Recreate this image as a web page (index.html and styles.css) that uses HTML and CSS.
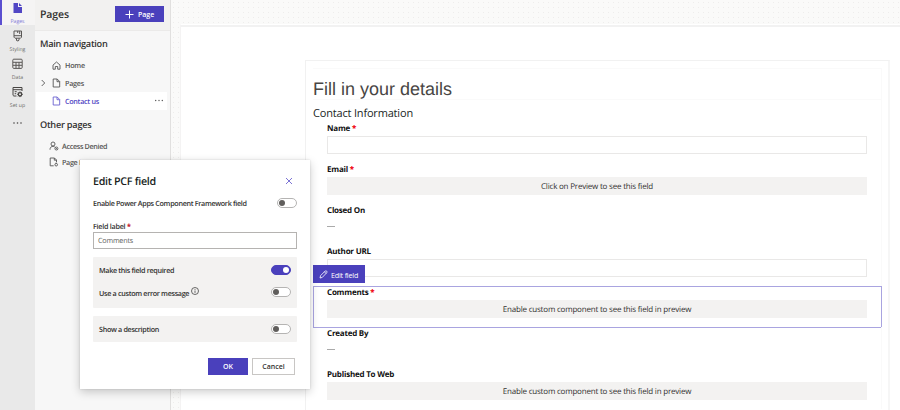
FILE: index.html
```html
<!DOCTYPE html>
<html lang="en">
<head>
<meta charset="utf-8">
<title>Pages</title>
<link rel="stylesheet" href="styles.css">
</head>
<body>
<div class="app">
  <nav class="rail">
    <div class="rail-item active">
      <svg width="11" height="12" viewBox="0 0 11 12"><path d="M1.500 1h4.500v4h4v6H1.500z" fill="#5146c4"/><path d="M7 1l3 3H7z" fill="#5146c4"/></svg>
      <span>Pages</span>
    </div>
    <div class="rail-item">
      <svg width="11" height="12" viewBox="0 0 11 12" fill="none" stroke="#5a5856"><path d="M2 1h7.500v6.200l-1 1H3l-1-1zM2 5.700h7.500M4.500 8.300v2.200L6 11l1-.8V8.300M5.700 1v2M7.700 1v3"/></svg>
      <span>Styling</span>
    </div>
    <div class="rail-item">
      <svg width="11" height="12" viewBox="0 0 11 12" fill="none" stroke="#5a5856"><rect x=".8" y="1.200" width="9.400" height="9.200" rx="1"/><path d="M1 4.300h9M1 7.300h9M4 4.300v6M7 4.300v6"/></svg>
      <span>Data</span>
    </div>
    <div class="rail-item">
      <svg width="11" height="12" viewBox="0 0 11 12" fill="none" stroke="#484644"><path d="M4.500 10H1.800L1 9.300V1.500h9V5M1 3.700h9M2.700 5.700h2M2.700 7.700h1.500"/><circle cx="8" cy="8.300" r="1.700" stroke-width="1.300"/><path d="M8 5.500v1M8 10v1.100M5.200 8.300h1M9.800 8.300h1M6 6.300l.8.8M9.200 9.500l.8.8M10 6.300l-.8.8M6.800 9.500l-.8.8"/></svg>
      <span>Set up</span>
    </div>
    <svg class="rail-more" width="11" height="4" viewBox="0 0 11 4" fill="#484644"><circle cx="2" cy="2" r=".8"/><circle cx="5.500" cy="2" r=".8"/><circle cx="9" cy="2" r=".8"/></svg>
  </nav>

  <aside class="panel">
    <header class="panel-head">
      <h1>Pages</h1>
      <button class="add"><svg width="9" height="9" viewBox="0 0 9 9" stroke="#fff" fill="none"><path d="M4.500.5v8M.5 4.500h8"/></svg><span>Page</span></button>
    </header>
    <h2>Main navigation</h2>
    <ul class="tree">
      <li><i class="chev"></i><svg width="9" height="9" viewBox="0 0 9 9" fill="none" stroke="#555" stroke-width=".9"><path d="M1 4.100L4.500 1 8 4.100v4.100H5.700V5.500H3.300v2.700H1z"/></svg><span>Home</span></li>
      <li><i class="chev"><svg width="5" height="8" viewBox="0 0 5 8" fill="none" stroke="#555" stroke-width=".9"><path d="M.7 1l3 3-3 3"/></svg></i><svg width="9" height="10" viewBox="0 0 9 10" fill="none" stroke="#555" stroke-width=".9"><path d="M1.200 1h4l2.500 2.500V9H1.200zM5 1v2.700h2.700"/></svg><span>Pages</span></li>
      <li class="selected"><i class="chev"></i><svg width="9" height="10" viewBox="0 0 9 10" fill="none" stroke="#6b62d0" stroke-width=".9"><path d="M1.200 1h4l2.500 2.500V9H1.200zM5 1v2.700h2.700"/></svg><span>Contact us</span><svg class="dots" width="10" height="3" viewBox="0 0 10 3" fill="#555"><circle cx="1.700" cy="1.500" r=".7"/><circle cx="5" cy="1.500" r=".7"/><circle cx="8.300" cy="1.500" r=".7"/></svg></li>
    </ul>
    <h2 class="other">Other pages</h2>
    <ul class="list">
      <li><svg width="10" height="10" viewBox="0 0 10 10" fill="none" stroke="#555" stroke-width=".9"><circle cx="4" cy="3" r="2"/><path d="M1 8.700c0-2.200 1.300-3.400 3-3.400.8 0 1.200.2 1.600.5"/><circle cx="7.400" cy="7.500" r="1.500"/><path d="M6.400 6.500l2 2"/></svg><span>Access Denied</span></li>
      <li><svg width="10" height="10" viewBox="0 0 10 10" fill="none" stroke="#555" stroke-width=".9"><path d="M4.700 8.800H1.200V1h4.300l2 2v2M5.300 1v2.200h2.200"/><circle cx="7.200" cy="7.700" r="1.300"/><path d="M7.200 5.500v1"/></svg><span>Page I</span></li>
    </ul>
  </aside>

  <main class="canvas">
    <div class="sheet">
      <section class="form">
        <h3>Fill in your details</h3>
        <div class="legend"><span>Contact Information</span></div>
        <div class="field"><label>Name <b>*</b></label><div class="input"></div></div>
        <div class="field"><label>Email <b>*</b></label><div class="bar"><span>Click on Preview to see this field</span></div></div>
        <div class="field"><label>Closed On</label><div class="dash"></div></div>
        <div class="field"><label>Author URL</label><div class="input"></div></div>
        <div class="field current"><button class="edit"><svg width="9" height="9" viewBox="0 0 9 9" fill="none" stroke="#fff" stroke-width=".8"><path d="M1 8l.6-2.400L6.200 1c1-.8 2.400.6 1.600 1.600L3.300 7.400zM5.400 1.800l1.700 1.700"/></svg><span>Edit field</span></button><label>Comments <b>*</b></label><div class="bar"><span>Enable custom component to see this field in preview</span></div></div>
        <div class="field"><label>Created By</label><div class="dash"></div></div>
        <div class="field"><label>Published To Web</label><div class="bar"><span>Enable custom component to see this field in preview</span></div></div>
      </section>
    </div>
  </main>
</div>

<div class="dialog" role="dialog">
  <div class="dialog-head"><h4>Edit PCF field</h4><svg width="8" height="8" viewBox="0 0 8 8" stroke="#5b51c9" stroke-width=".8"><path d="M1 1l6 6M7 1L1 7"/></svg></div>
  <div class="row enable"><span>Enable Power Apps Component Framework field</span><i class="toggle"></i></div>
  <div class="row-label">Field label <b>*</b></div>
  <div class="textbox"><span>Comments</span></div>
  <div class="group two">
    <div class="row"><span>Make this field required</span><i class="toggle on"></i></div>
    <div class="row custom"><span>Use a custom error message</span><svg class="info" width="8" height="8" viewBox="0 0 8 8" fill="none" stroke="#444" stroke-width=".8"><circle cx="4" cy="4" r="3.500"/><path d="M4 3.500v2.400M4 2v.8"/></svg><i class="toggle"></i></div>
  </div>
  <div class="group one">
    <div class="row"><span>Show a description</span><i class="toggle"></i></div>
  </div>
  <div class="actions"><button class="ok">OK</button><button class="cancel">Cancel</button></div>
</div>
</body>
</html>
```
FILE: styles.css
```css
* { box-sizing: border-box; }
body {
  margin: 0;
  width: 900px;
  height: 410px;
  overflow: hidden;
  font-family: "Open Sans", "Noto Sans", sans-serif;
  font-size: 7px;
  color: #323130;
  background: #fff;
  text-rendering: geometricPrecision;
}
h1, h2, h3, h4, ul { margin: 0; padding: 0; font-weight: 600; }
ul { list-style: none; }
svg { display: block; flex: none; }
span { white-space: nowrap; }
button { font: inherit; border: 0; padding: 0; margin: 0; }

.app { display: flex; height: 410px; }

.rail { width: 35px; flex: none; background: #e9e9e9; display: flex; flex-direction: column; align-items: center; }
.rail-item { width: 35px; height: 28px; padding: 5px 0 0 0; display: flex; flex-direction: column; align-items: center; font-size: 5.2px; line-height: 8px; color: #6b6967; gap: 3px; }
.rail-item.active { height: 25px; padding-top: 2px; background: #f5f4f4; color: #7f77d6; border-left: 2px solid #5b4fd0; padding-right: 2px; }
.rail-more { margin-top: 12px; }

.panel { width: 136px; flex: none; background: #f7f7f7; border-right: 1px solid #e1e0df; }
.panel-head { height: 31px; background: #f2f1f0; border-bottom: 1px solid #ebeae9; display: flex; justify-content: space-between; align-items: center; padding: 0 6px 2px 5px; }
.panel-head h1 { font-size: 10.5px; letter-spacing: -0.1px; padding-top: 2px; }
.add { width: 49px; height: 16px; background: #4a40bc; color: #fff; display: flex; align-items: center; padding-left: 10px; gap: 4px; font-size: 7px; font-weight: 600; }
.panel h2 { font-size: 9.2px; line-height: 12px; padding: 7px 0 0 5px; letter-spacing: -0.25px; }
.tree { padding-top: 6px; }
.tree li { height: 18px; margin-left: 1px; margin-right: 3px; padding-left: 5px; display: flex; align-items: center; font-size: 7.2px; color: #565554; }
.tree li > span { margin-left: 4px; letter-spacing: -0.25px; padding-top: 1px; }
.tree li.selected { background: #fff; color: #5146c4; font-weight: 600; }
.tree li.selected > span { padding-top: 2px; letter-spacing: -0.3px; }
.chev { width: 11px; flex: none; }
.dots { margin-left: auto; margin-right: 3px; margin-bottom: 2px; }
.panel h2.other { padding-top: 9px; }
.list { padding-top: 7px; }
.list li { height: 16px; padding-left: 14px; display: flex; align-items: center; gap: 3px; font-size: 7.2px; color: #565554; }
.list li > span { padding-top: 1px; letter-spacing: -0.33px; }

.canvas { flex: 1; padding: 24px 0 0 9px; background-color: #fafaf9; background-image: radial-gradient(circle, #eeedec 0.7px, transparent 1px); background-size: 5px 5px; }
.sheet { height: 386px; background: #fff; border-top: 1px solid #fff; box-shadow: inset 0 2px 0 #f2f2f2; padding: 35px 10px 0 124px; overflow: hidden; border-left: 1px solid #f4f3f3; }
.form { height: 360px; border: 1px solid #f1f1f1; border-right: 2px solid #f6f6f6; border-bottom: 0; padding: 7px 6px 0 7px; }
.form h3 { height: 32px; padding: 6px 0 0 0; border: 1px solid #fafafa; border-left: 0; font: 400 18px/28px "Liberation Sans", Arial, sans-serif; color: #484644; letter-spacing: 0; white-space: nowrap; }
.legend { height: 22px; border-right: 1px solid #fafafa; font-size: 11px; line-height: 27px; color: #201f1e; letter-spacing: -0.18px; }
.field { position: relative; height: 41px; padding: 0 14px; border-right: 1px solid #fafafa; }
.field label { display: block; height: 14px; line-height: 14px; font-size: 8px; letter-spacing: -0.22px; font-weight: 700; color: #111; }
.field label b { color: #f01020; }
.input { height: 18px; border: 1px solid #e9e8e7; background: #fff; }
.bar { height: 18px; background: #f3f2f1; display: flex; align-items: center; justify-content: center; font-size: 8px; letter-spacing: -0.2px; color: #323130; }
.dash { width: 8px; height: 1px; margin-top: 8px; background: #aaa; }
.current::before { content: ""; position: absolute; inset: 0 -1px -1px 0; border: 1px solid #a9a4e0; }
.edit { position: absolute; left: 0; top: -21px; width: 52px; height: 18px; background: #4a40bc; color: #fff; display: flex; align-items: center; padding-left: 6px; gap: 3px; font-size: 7.2px; letter-spacing: -0.2px; }
.edit span { padding-top: 1px; }

.dialog { position: absolute; left: 80px; top: 160px; width: 230px; height: 229px; background: #fff; box-shadow: 0 3px 9px rgba(0,0,0,.2), 0 0 2px rgba(0,0,0,.14); padding: 13px 13px 0; color: #323130; font-weight: 600; font-size: 7.2px; letter-spacing: -0.32px; }
.dialog-head { height: 16px; display: flex; align-items: center; justify-content: space-between; padding-right: 4px; }
.dialog-head h4 { font-size: 10.7px; color: #201f1e; line-height: 16px; letter-spacing: -0.3px; padding-top: 1px; }
.row { display: flex; align-items: center; height: 22px; }
.row .toggle { margin-left: auto; }
.row > span { padding-top: 1px; }
.custom > span { padding-top: 3px; }
.enable { margin-top: 3px; height: 23px; }
.enable .toggle { margin-bottom: 1px; }
.toggle { width: 20px; height: 10px; flex: none; border: 1px solid #b5b4b3; border-radius: 5px; background: #fff; display: flex; align-items: center; padding: 0 1px; }
.toggle::before { content: ""; width: 6px; height: 6px; border-radius: 50%; background: #605e5c; }
.toggle.on { background: #4a40bc; border-color: #4a40bc; justify-content: flex-end; }
.toggle.on::before { background: #fff; }
.row-label { height: 17px; line-height: 24px; letter-spacing: -0.25px; }
.row-label b { color: #c4262e; }
.textbox { height: 17px; border: 1px solid #b5b3b1; display: flex; align-items: center; padding-left: 4px; font-weight: 400; color: #605e5c; letter-spacing: -0.2px; }
.textbox span { padding-top: 1px; }
.group { background: #f3f2f1; border-radius: 1px; padding: 0 6px; }
.group.two { margin-top: 8px; height: 51px; padding-top: 2px; }
.group.one { margin-top: 8px; height: 26px; padding-top: 2px; }
.info { margin: -3px 0 0 2px; }
.actions { display: flex; justify-content: flex-end; gap: 4px; padding: 16px 2px 0 0; letter-spacing: -0.1px; }
.ok, .cancel { height: 17px; font-weight: 600; font-size: 7px; display: flex; align-items: center; justify-content: center; }
.ok { width: 40px; background: #4a40bc; color: #fff; }
.cancel { width: 43px; background: #fff; border: 1px solid #c8c6c4; color: #323130; }
```
